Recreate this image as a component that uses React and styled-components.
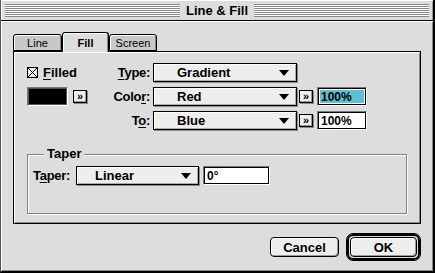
import React from "react";
import styled, { createGlobalStyle } from "styled-components";

const GlobalStyle = createGlobalStyle`
  html, body {
    margin: 0;
    padding: 0;
    background: #dddddd;
  }
  body {
    font-family: "Liberation Sans", Arial, sans-serif;
    color: #000;
  }
`;

const Window = styled.div`
  width: 435px;
  height: 273px;
  box-sizing: border-box;
  display: flex;
  flex-direction: column;
  background: #dddddd;
  border-right: 2px solid #000;
  border-bottom: 2px solid #000;
  border-left: 1px solid #555;
`;

const TitleBar = styled.div`
  height: 21px;
  box-sizing: border-box;
  display: flex;
  align-items: center;
  padding: 0 4px 0 4px;
  background: #dddddd;
  border-bottom: 1px solid #000;
  box-shadow: inset 1px 1px 0 #fff, inset -1px 0 0 #999;
`;

const Stripes = styled.div`
  flex: 1;
  height: 13px;
  background: repeating-linear-gradient(
    to bottom,
    #888888 0px,
    #888888 1px,
    #ffffff 1px,
    #ffffff 2px
  );
`;

const Title = styled.div`
  padding: 0 6px;
  font-size: 13px;
  font-weight: bold;
  line-height: 21px;
  white-space: nowrap;
`;

const Body = styled.div`
  flex: 1;
  display: flex;
  flex-direction: column;
  padding: 11px 11px 0 12px;
  box-shadow: inset 1px 1px 0 #fff, inset -1px -1px 0 #888;
`;

const Tabs = styled.div`
  display: flex;
  align-items: flex-end;
  height: 19px;
`;

const Tab = styled.div`
  position: relative;
  z-index: ${(p) => (p.$active ? 1 : 0)};
  width: ${(p) => p.$w}px;
  height: ${(p) => (p.$active ? 20 : 17)}px;
  margin-bottom: ${(p) => (p.$active ? -1 : 0)}px;
  box-sizing: border-box;
  border: 1px solid #000;
  border-bottom: ${(p) => (p.$active ? "none" : "1px solid #000")};
  border-radius: 3px 3px 0 0;
  background: ${(p) => (p.$active ? "#dddddd" : "#c8c8c8")};
  box-shadow: inset 1px 1px 0 #fff, inset -1px 0 0 #888;
  display: flex;
  align-items: center;
  justify-content: center;
  padding-top: ${(p) => (p.$active ? 0 : 1)}px;
  font-size: 11px;
  font-weight: ${(p) => (p.$active ? "bold" : "normal")};
`;

const Panel = styled.div`
  width: 408px;
  height: 173px;
  box-sizing: border-box;
  border: 1px solid #000;
  box-shadow: inset 1px 1px 0 #fff, inset -1px -1px 0 #888;
  padding: 11px 0 0 13px;
  display: flex;
  flex-direction: column;
`;

const FormGrid = styled.div`
  display: grid;
  grid-template-columns: 84px 42px 144px 20px 50px;
  grid-auto-rows: 19px;
  row-gap: 5px;
  align-items: center;
`;

const Label = styled.div`
  grid-column: 2;
  text-align: right;
  padding-right: 3px;
  font-size: 13px;
  font-weight: bold;
  letter-spacing: -0.3px;
  white-space: nowrap;
`;

const Key = styled.u`
  text-decoration-thickness: 1px;
  text-underline-offset: 2px;
`;

const CheckRow = styled.div`
  grid-column: 1;
  display: flex;
  align-items: center;
  gap: 5px;
  font-size: 13px;
  font-weight: bold;
`;

const CheckBox = styled.div`
  width: 11px;
  height: 11px;
  box-sizing: border-box;
  border: 1px solid #000;
  background: #eeeeee;
  display: flex;
`;

const SwatchRow = styled.div`
  grid-column: 1;
  display: flex;
  align-items: center;
  gap: 5px;
`;

const Swatch = styled.div`
  width: 41px;
  height: 19px;
  box-sizing: border-box;
  border: 1px solid;
  border-color: #777 #fff #fff #777;
  padding: 1px;
  background: #fff;
  & > div {
    width: 100%;
    height: 100%;
    background: #000;
    box-shadow: 0 0 0 1px #555;
  }
`;

const Popup = styled.div`
  grid-column: ${(p) => p.$col || "auto"};
  width: ${(p) => p.$w}px;
  height: 19px;
  box-sizing: border-box;
  border: 1px solid #000;
  background: #eeeeee;
  box-shadow: inset 1px 1px 0 #fff, inset -1px -1px 0 #aaa, 1px 1px 0 #888;
  display: flex;
  align-items: center;
  padding: 0 7px 0 ${(p) => p.$inset}px;
  font-size: 13px;
  font-weight: bold;
  & > span {
    flex: 1;
  }
`;

const Arrow = styled.div`
  width: 0;
  height: 0;
  border-left: 5px solid transparent;
  border-right: 5px solid transparent;
  border-top: 6px solid #000;
`;

const MoreButton = styled.div`
  grid-column: ${(p) => p.$col || "auto"};
  margin-left: ${(p) => p.$ml || 0}px;
  width: 14px;
  height: 13px;
  box-sizing: border-box;
  border: 1px solid #000;
  background: #eeeeee;
  box-shadow: inset -1px -1px 0 #999, 1px 1px 0 #888;
  display: flex;
  align-items: center;
  justify-content: center;
  font-size: 11px;
  font-weight: bold;
  line-height: 1;
`;

const Field = styled.div`
  grid-column: ${(p) => p.$col || "auto"};
  width: ${(p) => p.$w}px;
  height: 19px;
  margin-left: ${(p) => p.$ml || 0}px;
  box-sizing: border-box;
  border: 1px solid;
  border-color: #777 #fff #fff #777;
  box-shadow: inset 0 0 0 1px #000;
  background: #fff;
  padding: 2px;
  display: flex;
  font-size: 12px;
  font-weight: bold;
  & > span {
    flex: 1;
    display: flex;
    align-items: center;
    padding-left: 1px;
    background: ${(p) => (p.$selected ? "#5fc0cf" : "transparent")};
  }
`;

const Group = styled.fieldset`
  width: 380px;
  height: 67px;
  box-sizing: border-box;
  margin: 17px 0 0 0;
  padding: 5px 0 0 5px;
  border: 1px solid #808080;
  box-shadow: 1px 1px 0 #fff, inset 1px 1px 0 #fff;
  min-width: 0;
`;

const Legend = styled.legend`
  margin-left: 11px;
  padding: 0 3px;
  background: #dddddd;
  font-size: 13px;
  font-weight: bold;
  line-height: 14px;
`;

const TaperRow = styled.div`
  display: flex;
  align-items: center;
`;

const TaperLabel = styled.div`
  width: 43px;
  font-size: 13px;
  font-weight: bold;
  letter-spacing: -0.3px;
  white-space: nowrap;
`;

const ButtonRow = styled.div`
  display: flex;
  justify-content: flex-end;
  align-items: center;
  gap: 7px;
  margin-top: 9px;
  padding-right: 1px;
`;

const Button = styled.div`
  width: ${(p) => p.$w}px;
  height: 20px;
  box-sizing: border-box;
  border: 1px solid #000;
  border-radius: 4px;
  background: #eeeeee;
  box-shadow: inset 1px 1px 0 #fff, inset -1px -1px 0 #999;
  display: flex;
  align-items: center;
  justify-content: center;
  font-size: 13px;
  font-weight: bold;
`;

const DefaultRing = styled.div`
  padding: 3px;
  border: 1px solid #000;
  border-radius: 7px;
  background: #dddddd;
  box-shadow: inset 0 0 0 2px #000;
  & > div {
    border-radius: 4px;
  }
`;

export default function App() {
  return (
    <>
      <GlobalStyle />
      <Window>
        <TitleBar>
          <Stripes />
          <Title>Line &amp; Fill</Title>
          <Stripes />
        </TitleBar>
        <Body>
          <Tabs>
            <Tab $w={49}>Line</Tab>
            <Tab $w={47} $active>
              Fill
            </Tab>
            <Tab $w={48}>Screen</Tab>
          </Tabs>
          <Panel>
            <FormGrid>
              <CheckRow>
                <CheckBox>
                  <svg width="9" height="9" viewBox="0 0 9 9">
                    <path d="M0 0L9 9M9 0L0 9" stroke="#000" strokeWidth="1" />
                  </svg>
                </CheckBox>
                <span>
                  <Key>F</Key>illed
                </span>
              </CheckRow>
              <Label>
                <Key>T</Key>ype:
              </Label>
              <Popup $col={3} $w={144} $inset={23}>
                <span>Gradient</span>
                <Arrow />
              </Popup>

              <SwatchRow>
                <Swatch>
                  <div />
                </Swatch>
                <MoreButton>»</MoreButton>
              </SwatchRow>
              <Label>
                Colo<Key>r</Key>:
              </Label>
              <Popup $col={3} $w={144} $inset={23}>
                <span>Red</span>
                <Arrow />
              </Popup>
              <MoreButton $col={4} $ml={2}>
                »
              </MoreButton>
              <Field $col={5} $w={50} $selected>
                <span>100%</span>
              </Field>

              <Label>
                T<Key>o</Key>:
              </Label>
              <Popup $col={3} $w={144} $inset={23}>
                <span>Blue</span>
                <Arrow />
              </Popup>
              <MoreButton $col={4} $ml={2}>
                »
              </MoreButton>
              <Field $col={5} $w={50}>
                <span>100%</span>
              </Field>
            </FormGrid>

            <Group>
              <Legend>Taper</Legend>
              <TaperRow>
                <TaperLabel>
                  T<Key>a</Key>per:
                </TaperLabel>
                <Popup $w={123} $inset={18}>
                  <span>Linear</span>
                  <Arrow />
                </Popup>
                <Field $w={67} $ml={4}>
                  <span>0°</span>
                </Field>
              </TaperRow>
            </Group>
          </Panel>
          <ButtonRow>
            <Button $w={69}>Cancel</Button>
            <DefaultRing>
              <Button $w={67}>OK</Button>
            </DefaultRing>
          </ButtonRow>
        </Body>
      </Window>
    </>
  );
}
